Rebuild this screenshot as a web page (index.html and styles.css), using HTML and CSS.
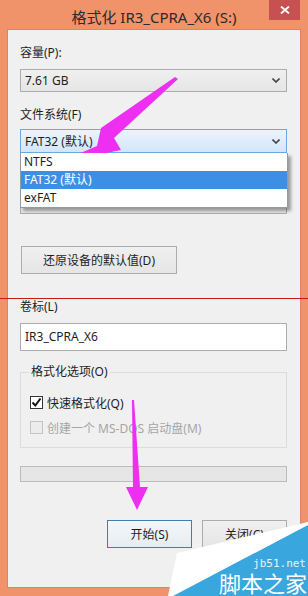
FILE: index.html
```html
<!DOCTYPE html>
<html lang="zh-CN">
<head>
    <meta charset="UTF-8">
    <title>格式化 IR3_CPRA_X6 (S:)</title>
    <link rel="stylesheet" href="styles.css">
</head>
<body>
    <div class="window">
        <div class="titlebar">
            <span class="title">格式化 IR3_CPRA_X6 (S:)</span>
            <span class="close">
                <svg width="10" height="8" viewBox="0 0 10 8"><path d="M1 0.5 L9 7.5 M9 0.5 L1 7.5" stroke="#fff" stroke-width="1.8"/></svg>
            </span>
        </div>

        <div class="client">
            <div class="field-label">容量(P):</div>
            <div class="combo">
                <span>7.61 GB</span>
                <svg class="chevron" width="8" height="5" viewBox="0 0 8 5"><path d="M0.5 0.5 L4 4 L7.5 0.5" fill="none" stroke="#444" stroke-width="1.6"/></svg>
            </div>

            <div class="field-label second">文件系统(F)</div>
            <div class="combo-wrap">
                <div class="combo focused">
                    <span>FAT32 (默认)</span>
                    <svg class="chevron" width="8" height="5" viewBox="0 0 8 5"><path d="M0.5 0.5 L4 4 L7.5 0.5" fill="none" stroke="#444" stroke-width="1.6"/></svg>
                </div>
                <ul class="droplist">
                    <li>NTFS</li>
                    <li class="selected">FAT32 (默认)</li>
                    <li>exFAT</li>
                </ul>
            </div>

            <!-- allocation unit row, hidden under the open list -->
            <div class="field-label third"></div>
            <div class="combo"></div>

            <button class="btn restore">还原设备的默认值(D)</button>

            <div class="field-label volume">卷标(L)</div>
            <div class="textbox">IR3_CPRA_X6</div>

            <fieldset class="options">
                <legend>格式化选项(O)</legend>
                <label class="check">
                    <span class="box checked">
                        <svg width="11" height="11" viewBox="0 0 11 11"><path d="M1.5 5.5 L4.3 8.5 L9.5 1.5" fill="none" stroke="#111" stroke-width="2"/></svg>
                    </span>
                    快速格式化(Q)
                </label>
                <label class="check disabled">
                    <span class="box"></span>
                    创建一个 MS-DOS 启动盘(M)
                </label>
            </fieldset>

            <div class="progress"></div>

            <div class="actions">
                <button class="btn default">开始(S)</button>
                <button class="btn">关闭(C)</button>
            </div>
        </div>

        <!-- annotation layer drawn over the screenshot -->
        <svg class="annotations" width="308" height="596" viewBox="0 0 308 596">
            <line x1="0" y1="298.5" x2="308" y2="298.5" stroke="#c41a1a" stroke-width="1"/>
            <polygon points="175,77 178,79 114,138 121,150 57,163 97,146 101,128" fill="#ee2ef0"/>
            <polygon points="132,400 134,400 140,487 148,487 137,510 126,487 133,487" fill="#ee2ef0"/>
            <polygon points="168,596 177,553 308,522 308,596" fill="#ffffff"/>
            <polygon points="173,596 308,525 308,596" fill="#3aa6de"/>
            <text x="306" y="567" text-anchor="end" class="wm-url">jb51.net</text>
            <text x="307" y="592" text-anchor="end" class="wm-name">脚本之家</text>
        </svg>
    </div>
</body>
</html>
```

FILE: styles.css
```css
* {
    box-sizing: border-box;
}

body {
    margin: 0;
    background: #f0926a;
    font-family: "Noto Sans", "Noto Sans CJK SC", sans-serif;
    font-size: 12px;
    color: #1e1e1e;
}

.window {
    position: relative;
    width: 308px;
    height: 596px;
    background: #f0926a;
    overflow: hidden;
}

.titlebar {
    height: 30px;
    display: flex;
    align-items: center;
    justify-content: center;
    position: relative;
}

.title {
    font-size: 15px;
    color: #2b2b2b;
    padding-top: 2px;
}

.close {
    position: absolute;
    top: 0;
    right: 8px;
    width: 31px;
    height: 20px;
    background: #c75050;
    display: flex;
    align-items: center;
    justify-content: center;
}

.client {
    margin: 0 8px;
    height: 557px;
    background: #f0f0f0;
    outline: 1px solid #d98660;
    padding: 15px 13px 0 12px;
}

.field-label {
    height: 16px;
    line-height: 16px;
}

.field-label.second {
    margin-top: 15px;
}

.field-label.third {
    margin-top: 14px;
}

.field-label.volume {
    margin-top: 25px;
}

.combo {
    margin-top: 8px;
    height: 23px;
    border: 1px solid #acacac;
    background: linear-gradient(#f0f0f0, #e5e5e5);
    display: flex;
    align-items: center;
    justify-content: space-between;
    padding: 0 6px 0 4px;
}

.combo-wrap {
    position: relative;
    margin-top: 6px;
}

.combo.focused {
    margin-top: 0;
    height: 24px;
    border-color: #6fa8e0;
    background: linear-gradient(#ebf4fd, #d2e6f9);
}

.droplist {
    position: absolute;
    left: 0;
    right: -1px;
    top: 24px;
    margin: 0;
    padding: 0;
    list-style: none;
    background: #fff;
    border: 1px solid #8d9bab;
    border-top: 0;
    box-shadow: 3px 3px 3px rgba(0, 0, 0, 0.35);
    z-index: 2;
}

.droplist li {
    height: 18px;
    line-height: 18px;
    padding-left: 3px;
}

.droplist li.selected {
    background: #3d8fe6;
    color: #fff;
}

.btn {
    display: block;
    height: 28px;
    border: 1px solid #acacac;
    background: linear-gradient(#f0f0f0, #e5e5e5);
    font-family: inherit;
    font-size: 12px;
    color: #1e1e1e;
    padding: 0;
}

.btn.restore {
    margin-top: 32px;
    margin-left: 1px;
    width: 156px;
}

.btn.default {
    border-color: #3c7fb1;
    background: linear-gradient(#f3f7fa, #e6ecf0);
}

.textbox {
    margin-top: 8px;
    height: 28px;
    border: 1px solid #abadb3;
    background: #fff;
    line-height: 26px;
    padding-left: 4px;
}

.options {
    margin: 13px 0 0;
    height: 84px;
    border: 1px solid #dcdcdc;
    padding: 0 0 0 8px;
}

.options legend {
    padding: 0 2px;
    line-height: 16px;
}

.check {
    display: flex;
    align-items: center;
    gap: 4px;
    height: 17px;
    margin-left: 1px;
    margin-top: 14px;
}

.check + .check {
    margin-top: 8px;
}

.box {
    width: 13px;
    height: 13px;
    border: 1px solid #333;
    background: #fff;
    display: flex;
    align-items: center;
    justify-content: center;
}

.check.disabled {
    color: #a6a6a6;
}

.check.disabled .box {
    border-color: #c4c4c4;
    background: #ececec;
}

.progress {
    margin-top: 18px;
    height: 16px;
    border: 1px solid #bcbcbc;
    background: #e6e6e6;
}

.actions {
    margin-top: 38px;
    display: flex;
    justify-content: flex-end;
    gap: 10px;
}

.actions .btn {
    width: 85px;
}

.annotations {
    position: absolute;
    left: 0;
    top: 0;
    pointer-events: none;
}

.wm-url {
    font-family: "DejaVu Sans Mono", monospace;
    font-size: 11px;
    fill: #e8f4fb;
}

.wm-name {
    font-family: "Noto Sans CJK SC", sans-serif;
    font-size: 22px;
    fill: #ffffff;
}
```
